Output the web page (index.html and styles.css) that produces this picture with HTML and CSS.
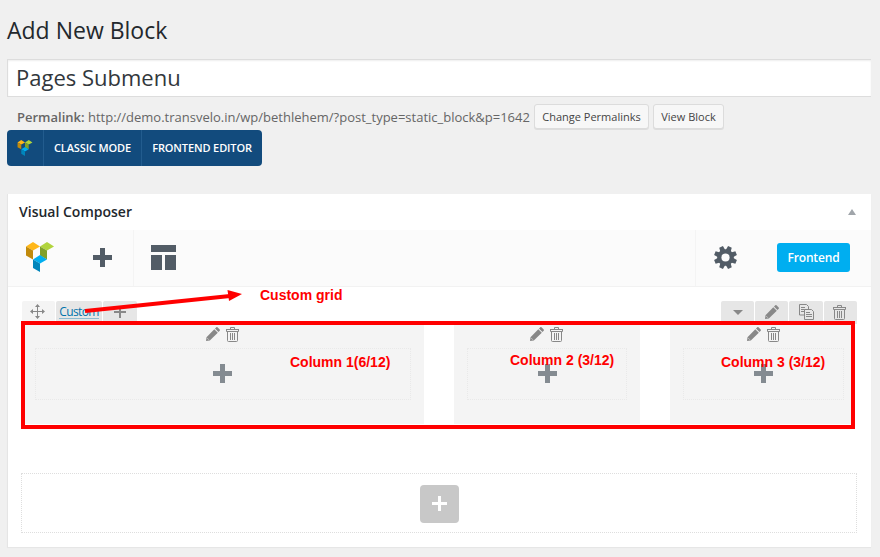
FILE: index.html
```html
<!DOCTYPE html>
<html lang="en">
<head>
<meta charset="utf-8">
<title>Add New Block</title>
<link rel="stylesheet" href="styles.css">
</head>
<body>
<svg class="defs" width="0" height="0">
  <symbol id="logo" viewBox="0 0 28 30">
    <path fill="#ffb718" d="M0 4.500 7 0l7 4.500L7 8.500z"/>
    <path fill="#c18a0c" d="M0 4.500 7 8.500V17.500L0 13.500z"/>
    <path fill="#b1d43d" d="M14 4.500 21 0l7 4.500L21 8.500z"/>
    <path fill="#80a02b" d="M14 4.500 21 8.500V17.500L14 13.500z"/>
    <path fill="#00aef0" d="M7 17.500 14 13l7 4.500L14 21.500z"/>
    <path fill="#0085bb" d="M7 17.500 14 21.500V30L7 26z"/>
  </symbol>
  <symbol id="pencil" viewBox="0 0 14 14">
    <path fill="#888" d="M0 14 .500 10.200 8.300 2.200 11.800 5.700 3.800 13.500zM9 1.600 10.300.300Q10.800-.2 11.500.300L13.700 2.500Q14.200 3.200 13.700 3.700L12.400 5z"/>
    <path stroke="#f4f4f4" stroke-width=".6" d="M1.300 11.200 2.800 12.700"/>
  </symbol>
  <symbol id="trash" viewBox="0 0 13 15">
    <g fill="none" stroke="#888"><path d="M4.500 2.500V.5h4v2M0 2.500h13M.5 2.500v2h12v-2M1.500 4.500v9q0 1 1 1h8q1 0 1-1v-9M4.500 6v7M6.500 6v7M8.500 6v7"/></g>
  </symbol>
</svg>
<h1>Add New Block</h1>
<div class="title-field">Pages Submenu</div>
<div class="permalink"><span class="url"><strong>Permalink:</strong> http://demo.transvelo.in/wp/bethlehem/?post_type=static_block&amp;p=1642</span><span class="btn change">Change Permalinks</span><span class="btn view">View Block</span></div>
<div class="modes">
  <span class="mode-logo"><svg width="16" height="16"><use href="#logo"/></svg></span>
  <span class="mode classic"><span>CLASSIC MODE</span></span>
  <span class="mode front"><span>FRONTEND EDITOR</span></span>
</div>
<main class="panel">
  <header><span class="heading">Visual Composer</span><i class="caret-up"></i></header>
  <div class="toolbar">
    <svg class="brand" width="28" height="30"><use href="#logo"/></svg>
    <svg class="add" width="19" height="19"><path fill="#525c66" d="M7 0h5v7h7v5h-7v7H7v-7H0V7h7z"/></svg>
    <i class="sep"></i>
    <svg class="layout" width="25" height="25"><path fill="#525c66" d="M0 0h25v7H0zM0 10h11v15H0zM14 10h11v15H14z"/></svg>
    <i class="sep right"></i>
    <svg class="gear" width="23" height="23" viewBox="-11.5 -11.5 23 23">
      <g fill="#525c66" transform="rotate(22.5)"><g id="teeth"><path id="tooth" d="M-2.600-7-2-11.500H2L2.600-7V7L2 11.500H-2L-2.600 7z"/><use href="#tooth" transform="rotate(90)"/></g><use href="#teeth" transform="rotate(45)"/><circle r="8.300"/></g>
      <circle r="4.100" fill="#fbfbfb"/>
    </svg>
    <span class="frontend">Frontend</span>
  </div>
  <div class="controls">
    <span class="tab move"><svg width="15" height="15"><path fill="none" stroke="#888" d="M7.500 1v13M1 7.500h13"/><path fill="#888" d="M7.500 0 10 3H5zM7.500 15 10 12H5zM0 7.500 3 5v5zM15 7.500 12 5v5z"/></svg></span>
    <span class="tab custom"><a>Custom</a></span>
    <span class="tab plus"><svg width="12" height="12"><path stroke="#888" stroke-width="2" d="M6 0v12M0 6h12"/></svg></span>
    <span class="tab drop"><i class="caret-down"></i></span>
    <span class="tab icon"><svg width="14" height="14"><use href="#pencil"/></svg></span>
    <span class="tab icon wide"><svg width="15" height="16"><g fill="#e7e7e7" stroke="#888"><path d="M.5.500h7l2 2v8.500h-9z"/><path fill="none" d="M2 3.500h4M2 5.500h6M2 7.500h6"/><path d="M5.500 5.500h7l2 2v8h-9z"/><path fill="none" d="M7 8.500h4M7 10.500h6M7 12.500h6"/></g></svg></span>
    <span class="tab icon"><svg width="13" height="15"><use href="#trash"/></svg></span>
  </div>
  <div class="columns">
    <section><div class="tools"><svg width="14" height="14"><use href="#pencil"/></svg><svg width="13" height="15"><use href="#trash"/></svg></div><div class="drop-area"><svg width="19" height="19"><path fill="#848b91" d="M7 0h5v7h7v5h-7v7H7v-7H0V7h7z"/></svg></div></section>
    <section><div class="tools"><svg width="14" height="14"><use href="#pencil"/></svg><svg width="13" height="15"><use href="#trash"/></svg></div><div class="drop-area"><svg width="19" height="19"><path fill="#848b91" d="M7 0h5v7h7v5h-7v7H7v-7H0V7h7z"/></svg></div></section>
    <section><div class="tools"><svg width="14" height="14"><use href="#pencil"/></svg><svg width="13" height="15"><use href="#trash"/></svg></div><div class="drop-area"><svg width="19" height="19"><path fill="#848b91" d="M7 0h5v7h7v5h-7v7H7v-7H0V7h7z"/></svg></div></section>
  </div>
  <div class="empty"><span class="add-block"><svg width="15" height="15"><path stroke="#fff" stroke-width="3" d="M7.500 0v15M0 7.500h15"/></svg></span></div>
</main>
<div class="outline"></div>
<svg class="arrow" width="158" height="26"><path stroke="#f00" stroke-width="4" d="M0 22 145 7"/><path fill="#f00" d="M142.500 1 157 5 144 12z"/></svg>
<b class="note n0">Custom grid</b>
<b class="note n1">Column 1(6/12)</b>
<b class="note n2">Column 2 (3/12)</b>
<b class="note n3">Column 3 (3/12)</b>
</body>
</html>
```

FILE: styles.css
```css
* { box-sizing: border-box; }
body { position: relative; margin: 0; width: 880px; height: 557px; overflow: hidden; background: #f0f0f0; font-family: "Open Sans", sans-serif; color: #23282d; }
svg { display: block; flex: none; }
.defs { position: absolute; }
h1 { margin: 0; padding: 14px 0 0 7px; height: 59px; font-size: 23px; font-weight: 400; line-height: 32px; white-space: nowrap; }
.title-field { margin-left: 7px; width: 864px; height: 38px; padding-left: 8px; border: 1px solid #ddd; border-right: 0; background: #fff; box-shadow: inset 0 1px 2px rgba(0,0,0,.07); color: #32373c; font-size: 22px; line-height: 34px; }
.permalink { display: flex; align-items: center; height: 25px; margin-top: 7px; padding-left: 17px; color: #666; font-size: 13px; white-space: nowrap; }
.url { width: 517px; }
strong { font-weight: 600; }
.btn { display: flex; align-items: center; justify-content: center; height: 25px; border: 1px solid #dcdcdc; border-radius: 3px; background: #f7f7f7; box-shadow: 0 1px 0 #ddd; color: #444; font-size: 11px; }
.change { width: 115px; }
.view { width: 71px; margin-left: 4px; }
.modes { display: flex; width: 255px; height: 36px; margin: 1px 0 0 7px; border-radius: 4px; background: #124b7d; color: #fff; font-size: 11px; font-weight: 600; letter-spacing: -.12px; white-space: nowrap; }
.mode-logo, .mode { display: flex; align-items: center; justify-content: center; }
.mode-logo { width: 36px; }
.mode { padding-bottom: 2px; border-left: 1px solid #225c8e; }
.classic { width: 98px; }
.front { width: 121px; }
.panel { width: 864px; height: 353px; margin: 28px 0 0 7px; border-left: 1px solid #e5e5e5; background: #fff; box-shadow: 0 1px 1px rgba(0,0,0,.04); }
header { display: flex; align-items: center; justify-content: space-between; height: 36px; padding: 0 15px 0 11px; font-size: 14px; font-weight: 600; }
.heading { padding-bottom: 2px; }
.caret-up { border: 4px solid transparent; border-top: 0; border-bottom: 6px solid #a0a5aa; }
.toolbar { display: flex; align-items: center; height: 57px; padding: 0 21px 0 18px; border-bottom: 1px solid #f2f2f2; background: #fbfbfb; }
.brand { margin-top: -3px; }
.add { margin-left: 39px; margin-top: -1px; }
.sep { width: 1px; height: 56px; margin-left: 21px; background: #f4f4f4; }
.layout { margin-left: 17px; margin-top: -1px; }
.right { margin-left: auto; }
.gear { margin: -2px 0 0 18px; }
.frontend { width: 73px; height: 29px; margin: -1px 0 0 40px; border-radius: 3px; background: #00aef0; color: #fff; font-size: 12px; font-weight: 600; letter-spacing: -.15px; line-height: 29px; text-align: center; }
.controls { display: flex; height: 23px; gap: 1px; margin: 14px 14px 0; }
.tab { display: flex; align-items: center; justify-content: center; width: 33px; border-radius: 2px 2px 0 0; background: #e6e6e6; }
.icon { padding-bottom: 1px; }
.icon:last-child { padding-right: 2px; }
.move { background: #f4f4f4; align-items: flex-start; padding: 3px 3px 0 0; }
.custom { width: 46px; align-items: flex-start; padding-top: 3px; font-size: 12px; letter-spacing: -.6px; }
.custom a { color: #0073aa; height: 15px; border-bottom: 1px solid #8dbbd0; line-height: 16px; }
.plus { width: 34px; }
.plus svg { margin-top: -1px; }
.drop { margin-left: auto; }
.wide { width: 34px; }
.caret-down { border: 5px solid transparent; border-bottom: 0; border-top-color: #888; }
.columns { display: grid; grid-template-columns: 402px 186px 185px; gap: 30px; height: 100px; padding-left: 14px; }
section { padding: 3px 13px 0; background: #f4f4f4; }
section:last-child { padding-right: 11px; }
.tools { display: flex; gap: 6px; justify-content: center; height: 20px; padding-right: 1px; }
.drop-area { display: flex; align-items: center; justify-content: center; height: 52px; margin-top: 1px; padding: 0 1px 1px 0; border: 1px dotted #e9e9e9; }
section:nth-child(2) .drop-area { padding-right: 0; }
.empty { display: flex; align-items: center; justify-content: center; width: 836px; height: 60px; margin: 49px 0 0 13px; border: 1px dotted #dedede; }
.add-block { display: flex; align-items: center; justify-content: center; width: 39px; height: 38px; margin-top: 2px; padding-bottom: 1px; border-radius: 4px; background: #c8c8c8; }
.outline { position: absolute; left: 21px; top: 321px; width: 834px; height: 108px; border: 4px solid red; }
.arrow { position: absolute; left: 85px; top: 289px; }
.note { position: absolute; color: red; font: bold 14px/16px "Liberation Sans", sans-serif; white-space: nowrap; }
.n0 { left: 260px; top: 287px; }
.n1 { left: 290px; top: 354px; }
.n2 { left: 510px; top: 352px; }
.n3 { left: 721px; top: 354px; }
```
